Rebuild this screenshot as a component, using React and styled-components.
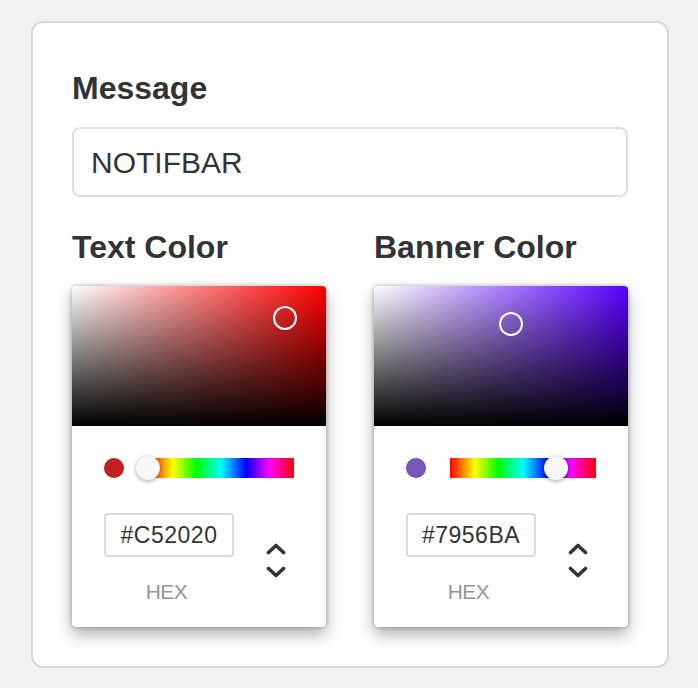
import React from 'react'
import styled, { createGlobalStyle } from 'styled-components'

const GlobalStyle = createGlobalStyle`
  html, body {
    margin: 0;
    padding: 0;
    background: #f2f2f2;
    font-family: "Liberation Sans", Arial, Helvetica, sans-serif;
    color: #333;
  }
`

const Page = styled.div`
  padding: 21px 29px 20px 31px;
`

const Card = styled.div`
  width: 638px;
  box-sizing: border-box;
  background: #fff;
  border: 2px solid #d9d9d9;
  border-radius: 12px;
  padding: 46px 39px 39px 39px;
`

const Title = styled.h2`
  margin: 0;
  font-size: 32px;
  line-height: 38px;
  font-weight: 700;
  color: #333;
`

const MessageInput = styled.input`
  display: block;
  box-sizing: border-box;
  width: 100%;
  height: 70px;
  margin: 20px 0 31px;
  padding: 2px 17px 0;
  border: 2px solid #dedede;
  border-radius: 8px;
  font-family: inherit;
  font-size: 30px;
  color: #333;
  background: #fff;
  outline: none;
`

const Columns = styled.div`
  display: grid;
  grid-template-columns: 1fr 1fr;
  column-gap: 48px;
`

const Column = styled.div`
  display: flex;
  flex-direction: column;
  gap: 20px;
`

const Picker = styled.div`
  width: 254px;
  background: #fff;
  border-radius: 4px;
  box-shadow: 0 0 4px rgba(0, 0, 0, 0.3), 0 8px 16px rgba(0, 0, 0, 0.3);
`

const Saturation = styled.div`
  position: relative;
  height: 140px;
  border-radius: 4px 4px 0 0;
  overflow: hidden;
  background-image: linear-gradient(to top, #000, rgba(0, 0, 0, 0)),
    linear-gradient(to right, #fff, rgba(255, 255, 255, 0));
`

const SatCursor = styled.div`
  position: absolute;
  width: 24px;
  height: 24px;
  margin: -12px 0 0 -12px;
  border-radius: 50%;
  box-shadow: inset 0 0 0 2px #fff, 0 0 1px rgba(0, 0, 0, 0.3);
`

const Body = styled.div`
  padding: 30px 32px 22px;
`

const HueRow = styled.div`
  display: flex;
  align-items: center;
  height: 24px;
  gap: 24px;
`

const Swatch = styled.div`
  width: 20px;
  height: 20px;
  flex: none;
  border-radius: 50%;
  background: ${({ $color }) => $color};
  box-shadow: inset 0 0 0 1px rgba(0, 0, 0, 0.08);
`

const HueTrack = styled.div`
  position: relative;
  flex: 1;
  height: 20px;
  background: linear-gradient(
    to right,
    #f00 0%,
    #ff0 17%,
    #0f0 33%,
    #0ff 50%,
    #00f 67%,
    #f0f 83%,
    #f00 100%
  );
`

const HueKnob = styled.div`
  position: absolute;
  top: -2px;
  width: 24px;
  height: 24px;
  margin-left: -12px;
  border-radius: 50%;
  background: #f8f8f8;
  box-shadow: 0 1px 4px rgba(0, 0, 0, 0.37);
`

const Fields = styled.div`
  display: flex;
  margin-top: 33px;
`

const FieldCol = styled.div`
  width: 130px;
  display: flex;
  flex-direction: column;
  align-items: center;
`

const HexInput = styled.input`
  box-sizing: border-box;
  width: 130px;
  height: 44px;
  border: none;
  border-radius: 4px;
  box-shadow: inset 0 0 0 2px #dadada;
  text-align: center;
  font-family: inherit;
  font-size: 23px;
  letter-spacing: 0.5px;
  color: #333;
  background: #fff;
  outline: none;
`

const FieldLabel = styled.span`
  margin: 22px 5px 0 0;
  font-size: 21px;
  line-height: 26px;
  letter-spacing: -0.6px;
  color: #969696;
  text-transform: uppercase;
`

const Toggle = styled.div`
  width: 36px;
  margin-left: 24px;
  padding-top: 30px;
  display: flex;
  flex-direction: column;
  align-items: center;
  gap: 11px;
`

const Chevron = ({ down }) => (
  <svg width="20" height="12" viewBox="0 0 20 12">
    <polyline
      points={down ? '2.5,2.5 10,9.5 17.5,2.5' : '2.5,9.5 10,2.5 17.5,9.5'}
      fill="none"
      stroke="#333"
      strokeWidth="3.6"
      strokeLinecap="round"
      strokeLinejoin="round"
    />
  </svg>
)

const toHsv = (hex) => {
  const n = parseInt(hex.slice(1), 16)
  const r = (n >> 16) / 255
  const g = ((n >> 8) & 255) / 255
  const b = (n & 255) / 255
  const max = Math.max(r, g, b)
  const min = Math.min(r, g, b)
  const d = max - min
  let h = 0
  if (d) {
    if (max === r) h = ((g - b) / d) % 6
    else if (max === g) h = (b - r) / d + 2
    else h = (r - g) / d + 4
    h *= 60
    if (h < 0) h += 360
  }
  return { h, s: max ? d / max : 0, v: max }
}

const ColorPicker = ({ color }) => {
  const { h, s, v } = toHsv(color)
  return (
    <Picker>
      <Saturation style={{ backgroundColor: `hsl(${h}, 100%, 50%)` }}>
        <SatCursor style={{ left: `${s * 100}%`, top: `${(1 - v) * 100}%` }} />
      </Saturation>
      <Body>
        <HueRow>
          <Swatch $color={color} />
          <HueTrack>
            <HueKnob style={{ left: `${(h / 360) * 100}%` }} />
          </HueTrack>
        </HueRow>
        <Fields>
          <FieldCol>
            <HexInput defaultValue={color} />
            <FieldLabel>hex</FieldLabel>
          </FieldCol>
          <Toggle>
            <Chevron />
            <Chevron down />
          </Toggle>
        </Fields>
      </Body>
    </Picker>
  )
}

const App = () => (
  <Page>
    <GlobalStyle />
    <Card>
      <Title>Message</Title>
      <MessageInput defaultValue="NOTIFBAR" />
      <Columns>
        <Column>
          <Title>Text Color</Title>
          <ColorPicker color="#C52020" />
        </Column>
        <Column>
          <Title>Banner Color</Title>
          <ColorPicker color="#7956BA" />
        </Column>
      </Columns>
    </Card>
  </Page>
)

export default App
